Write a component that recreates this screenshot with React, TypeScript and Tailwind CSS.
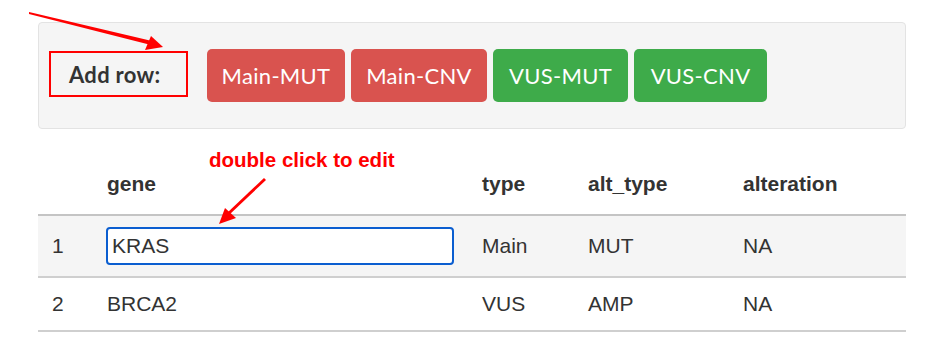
import React from 'react';

const buttons = [
    { label: 'Main-MUT', color: 'bg-[#d9534f]', width: 'w-[138px]' },
    { label: 'Main-CNV', color: 'bg-[#d9534f]', width: 'w-[136px]' },
    { label: 'VUS-MUT', color: 'bg-[#3eab4a]', width: 'w-[135px]' },
    { label: 'VUS-CNV', color: 'bg-[#3eab4a]', width: 'w-[133px]' },
];

const rows = [
    { idx: 1, gene: 'KRAS', type: 'Main', alt: 'MUT', alteration: 'NA', editing: true },
    { idx: 2, gene: 'BRCA2', type: 'VUS', alt: 'AMP', alteration: 'NA', editing: false },
];

export default function App() {
    return (
        <div className="relative w-[936px] h-[350px] bg-white overflow-hidden pl-[38px] pr-[30px] pt-[22px]" style={{ fontFamily: '"Liberation Sans", Arial, sans-serif' }}>
            {/* Add row panel */}
            <div className="h-[107px] bg-[#f5f5f5] border border-[#e3e3e3] rounded-[4px] flex items-center pl-[10px]">
                <div className="w-[139px] h-[46px] border-2 border-[#ff0000] flex items-center pl-[18px] mr-[19px] -mt-[3px]">
                    <span className="text-[22px] font-bold text-[#333] tracking-[0.3px]" style={{ fontFamily: 'Lato, sans-serif' }}>Add row:</span>
                </div>
                <div className="flex items-center gap-[6px]">
                    {buttons.map((b) => (
                        <button
                            key={b.label}
                            className={`${b.color} ${b.width} h-[53px] rounded-[5px] text-white text-[22px] leading-none tracking-[0.3px]`}
                            style={{ fontFamily: 'Lato, sans-serif' }}
                        >
                            {b.label}
                        </button>
                    ))}
                </div>
            </div>

            {/* Table */}
            <table className="table-fixed w-[868px] mt-[12px] text-[#333] border-collapse">
                <colgroup>
                    <col className="w-[55px]" />
                    <col className="w-[375px]" />
                    <col className="w-[106px]" />
                    <col className="w-[155px]" />
                    <col className="w-[177px]" />
                </colgroup>
                <thead>
                    <tr className="border-b-2 border-[#c4c4c4]">
                        <th className="pl-[14px] pt-[28px] pb-[15px] text-left text-[21px] font-bold leading-[30px]"></th>
                        <th className="pl-[14px] pt-[28px] pb-[15px] text-left text-[21px] font-bold leading-[30px]">gene</th>
                        <th className="pl-[14px] pt-[28px] pb-[15px] text-left text-[21px] font-bold leading-[30px]">type</th>
                        <th className="pl-[14px] pt-[28px] pb-[15px] text-left text-[21px] font-bold leading-[30px]">alt_type</th>
                        <th className="pl-[14px] pt-[28px] pb-[15px] text-left text-[21px] font-bold leading-[30px]">alteration</th>
                    </tr>
                </thead>
                <tbody>
                    {rows.map((r) => (
                        <tr key={r.idx} className={`border-b-2 border-[#cfcfcf] ${r.idx === 1 ? 'bg-[#f5f5f5]' : 'bg-white'}`}>
                            <td className="pl-[14px] py-[11px] text-[21px] leading-[30px]">{r.idx}</td>
                            <td className="pl-[14px] pr-[14px] py-[11px] text-[21px] leading-[30px]">
                                {r.editing ? (
                                    <div className="-ml-[1px] h-[38px] border-2 border-[#0b5ed0] rounded-[4px] bg-white flex items-center px-[4px]">
                                        {r.gene}
                                    </div>
                                ) : (
                                    r.gene
                                )}
                            </td>
                            <td className="pl-[14px] py-[11px] text-[21px] leading-[30px]">{r.type}</td>
                            <td className="pl-[14px] py-[11px] text-[21px] leading-[30px]">{r.alt}</td>
                            <td className="pl-[14px] py-[11px] text-[21px] leading-[30px]">{r.alteration}</td>
                        </tr>
                    ))}
                </tbody>
            </table>

            {/* Annotation label */}
            <span className="absolute left-[209px] top-[148px] text-[20.5px] font-bold text-[#ff0000] leading-[24px]">double click to edit</span>

            {/* Annotation arrows */}
            <svg className="absolute left-0 top-0 pointer-events-none" width="936" height="350" viewBox="0 0 936 350">
                <polygon points="29,12 152,41 151,45 29,14" fill="#ff0000" />
                <polygon points="163,47 145,50 151,36" fill="#ff0000" />
                <polygon points="264,178 266,180 229,215 227,213" fill="#ff0000" />
                <polygon points="219,224 225,208 236,218" fill="#ff0000" />
            </svg>
        </div>
    );
}
